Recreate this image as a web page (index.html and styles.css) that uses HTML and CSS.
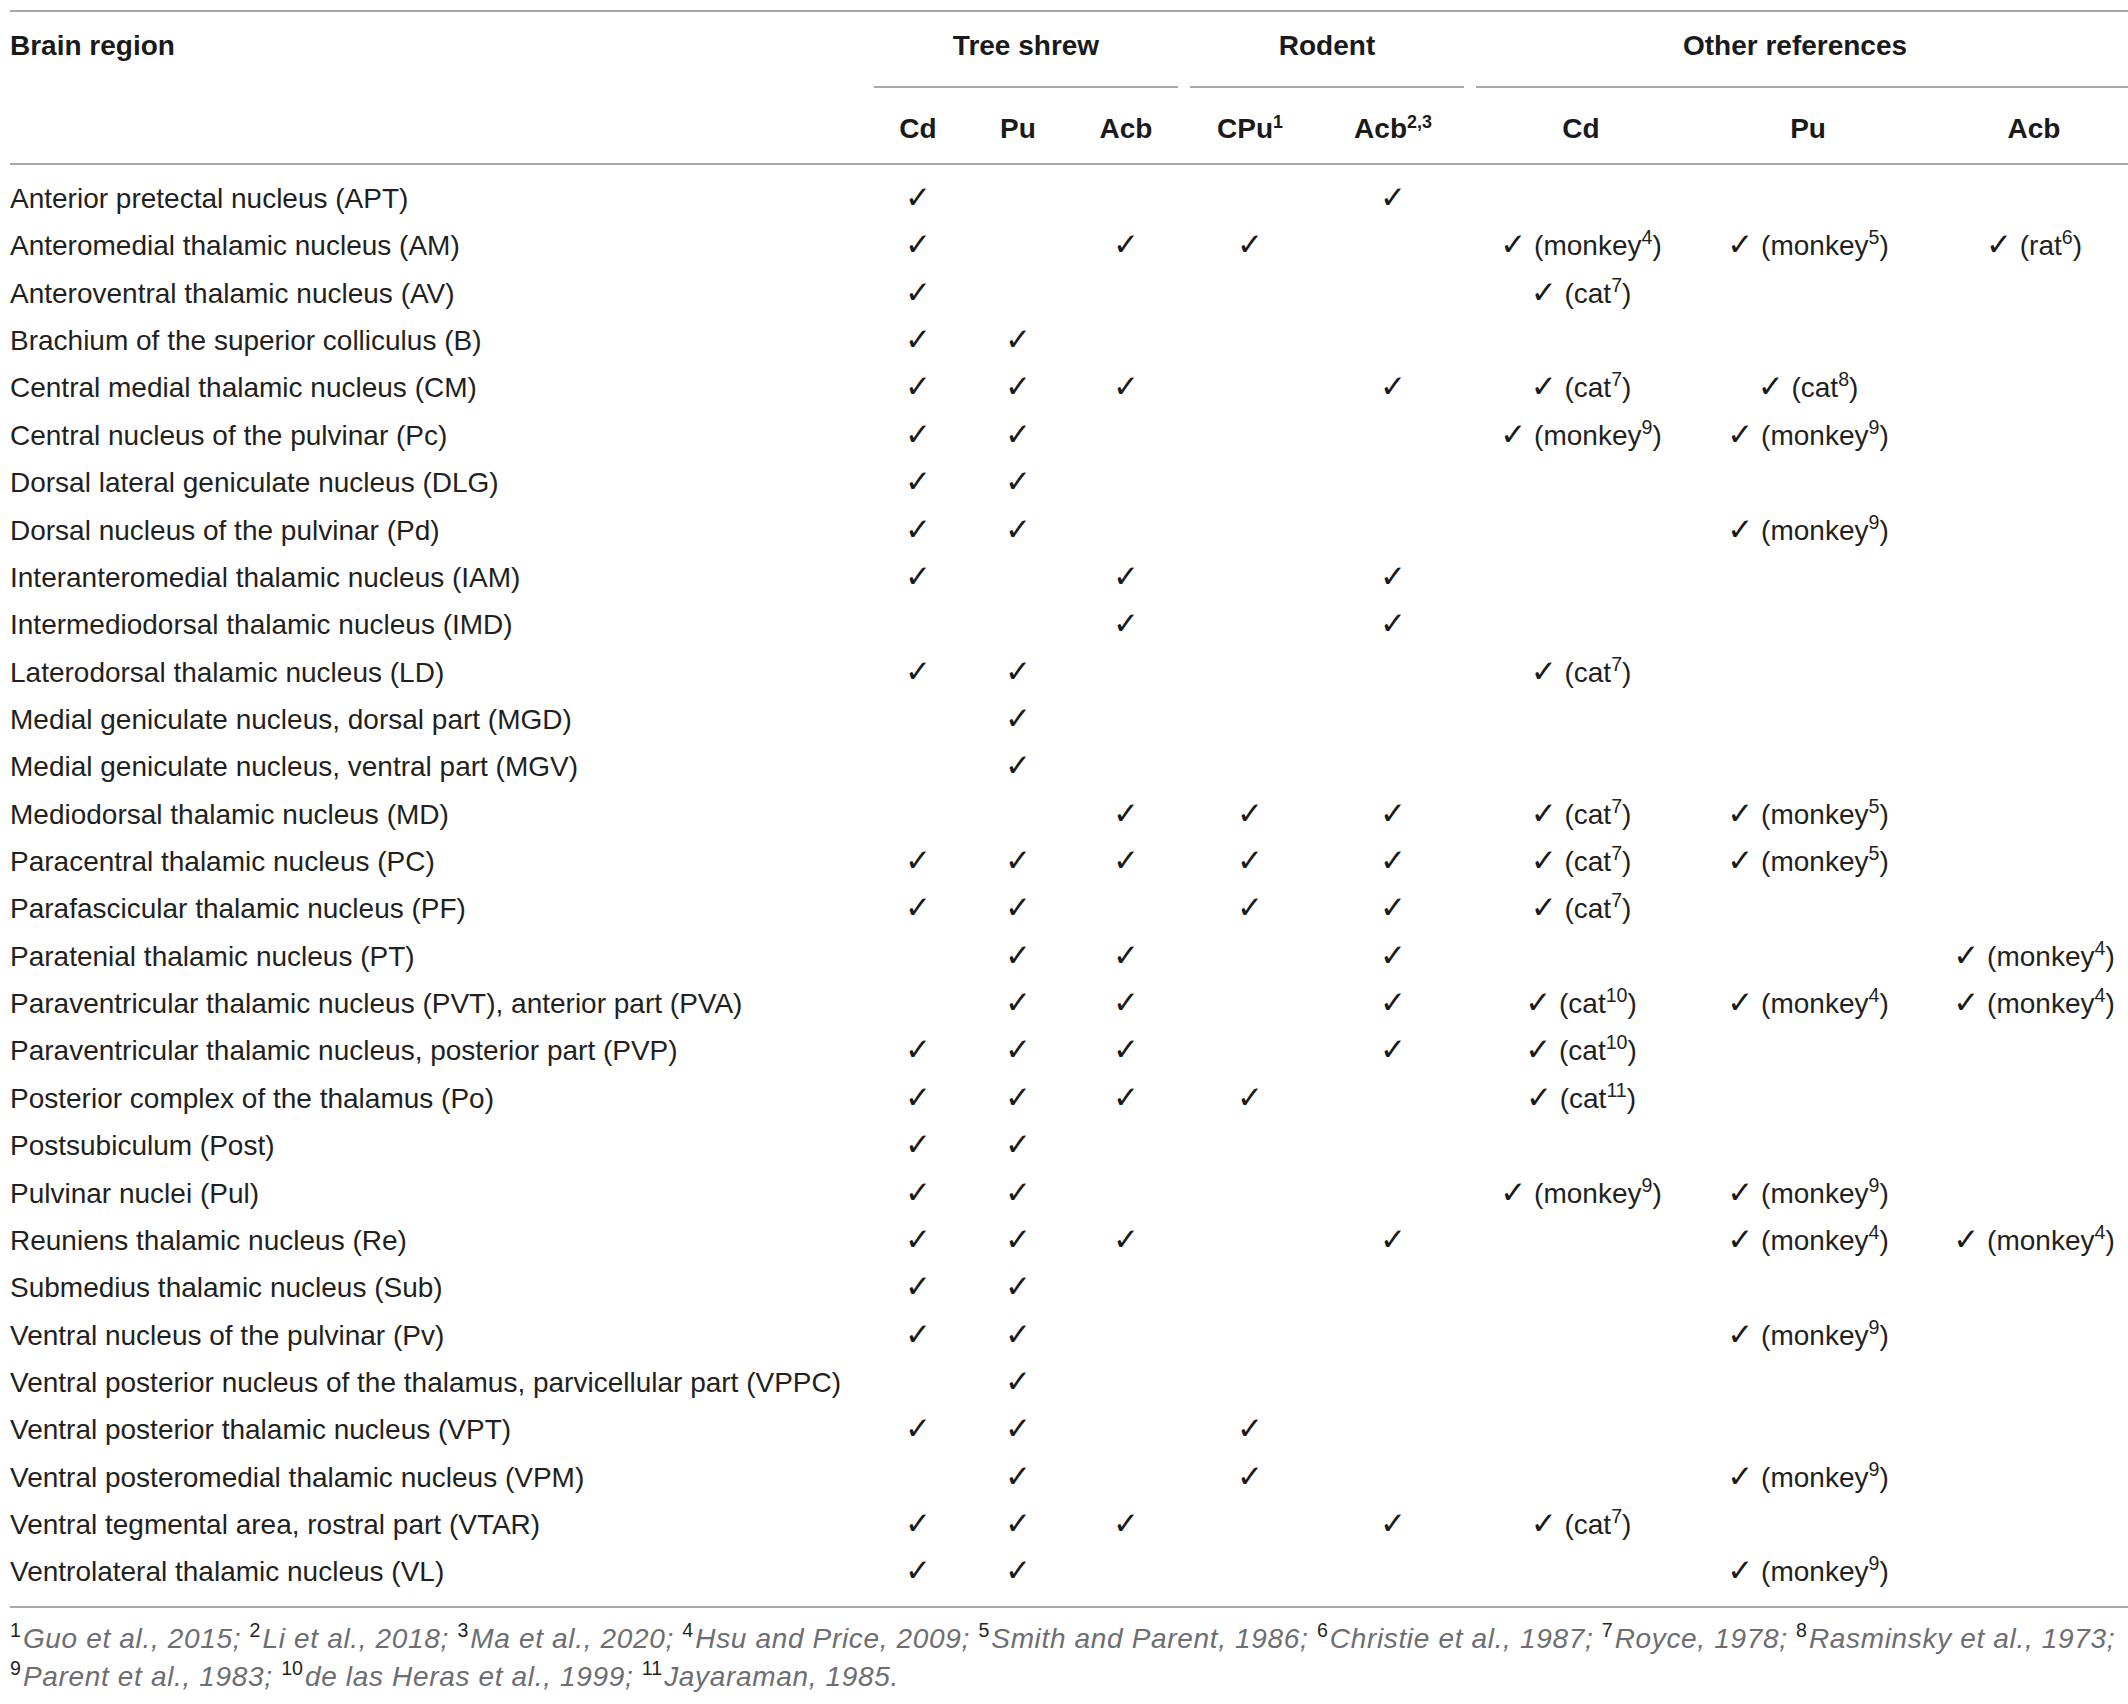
FILE: index.html
```html
<!DOCTYPE html>
<html lang="en">

<head>
    <meta charset="UTF-8">
    <title>Thalamic inputs to the striatum</title>
    <link rel="stylesheet" href="styles.css">
</head>

<body>
    <table class="data-table">
        <colgroup>
            <col class="col-region">
            <col class="col-100">
            <col class="col-100">
            <col class="col-116">
            <col class="col-132">
            <col class="col-154">
            <col class="col-222">
            <col class="col-232">
            <col class="col-204">
        </colgroup>
        <thead>
            <tr class="group-row">
                <th rowspan="2" class="region-head">Brain region</th>
                <th colspan="3" class="group"><div class="group-title">Tree shrew</div></th>
                <th colspan="2" class="group"><div class="group-title">Rodent</div></th>
                <th colspan="3" class="group group-last"><div class="group-title">Other references</div></th>
            </tr>
            <tr class="sub-row">
                <th>Cd</th>
                <th>Pu</th>
                <th>Acb</th>
                <th>CPu<sup>1</sup></th>
                <th>Acb<sup>2,3</sup></th>
                <th>Cd</th>
                <th>Pu</th>
                <th class="last-col">Acb</th>
            </tr>
        </thead>
        <tbody>
            <tr>
                <td>Anterior pretectal nucleus (APT)</td>
                <td><span class="tick">✓</span></td><td></td><td></td>
                <td></td><td><span class="tick">✓</span></td>
                <td></td><td></td><td class="last-col"></td>
            </tr>
            <tr>
                <td>Anteromedial thalamic nucleus (AM)</td>
                <td><span class="tick">✓</span></td><td></td><td><span class="tick">✓</span></td>
                <td><span class="tick">✓</span></td><td></td>
                <td><span class="tick">✓</span> (monkey<sup>4</sup>)</td>
                <td><span class="tick">✓</span> (monkey<sup>5</sup>)</td>
                <td class="last-col"><span class="tick">✓</span> (rat<sup>6</sup>)</td>
            </tr>
            <tr>
                <td>Anteroventral thalamic nucleus (AV)</td>
                <td><span class="tick">✓</span></td><td></td><td></td>
                <td></td><td></td>
                <td><span class="tick">✓</span> (cat<sup>7</sup>)</td><td></td><td class="last-col"></td>
            </tr>
            <tr>
                <td>Brachium of the superior colliculus (B)</td>
                <td><span class="tick">✓</span></td><td><span class="tick">✓</span></td><td></td>
                <td></td><td></td>
                <td></td><td></td><td class="last-col"></td>
            </tr>
            <tr>
                <td>Central medial thalamic nucleus (CM)</td>
                <td><span class="tick">✓</span></td><td><span class="tick">✓</span></td><td><span class="tick">✓</span></td>
                <td></td><td><span class="tick">✓</span></td>
                <td><span class="tick">✓</span> (cat<sup>7</sup>)</td>
                <td><span class="tick">✓</span> (cat<sup>8</sup>)</td>
                <td class="last-col"></td>
            </tr>
            <tr>
                <td>Central nucleus of the pulvinar (Pc)</td>
                <td><span class="tick">✓</span></td><td><span class="tick">✓</span></td><td></td>
                <td></td><td></td>
                <td><span class="tick">✓</span> (monkey<sup>9</sup>)</td>
                <td><span class="tick">✓</span> (monkey<sup>9</sup>)</td>
                <td class="last-col"></td>
            </tr>
            <tr>
                <td>Dorsal lateral geniculate nucleus (DLG)</td>
                <td><span class="tick">✓</span></td><td><span class="tick">✓</span></td><td></td>
                <td></td><td></td>
                <td></td><td></td><td class="last-col"></td>
            </tr>
            <tr>
                <td>Dorsal nucleus of the pulvinar (Pd)</td>
                <td><span class="tick">✓</span></td><td><span class="tick">✓</span></td><td></td>
                <td></td><td></td>
                <td></td><td><span class="tick">✓</span> (monkey<sup>9</sup>)</td><td class="last-col"></td>
            </tr>
            <tr>
                <td>Interanteromedial thalamic nucleus (IAM)</td>
                <td><span class="tick">✓</span></td><td></td><td><span class="tick">✓</span></td>
                <td></td><td><span class="tick">✓</span></td>
                <td></td><td></td><td class="last-col"></td>
            </tr>
            <tr>
                <td>Intermediodorsal thalamic nucleus (IMD)</td>
                <td></td><td></td><td><span class="tick">✓</span></td>
                <td></td><td><span class="tick">✓</span></td>
                <td></td><td></td><td class="last-col"></td>
            </tr>
            <tr>
                <td>Laterodorsal thalamic nucleus (LD)</td>
                <td><span class="tick">✓</span></td><td><span class="tick">✓</span></td><td></td>
                <td></td><td></td>
                <td><span class="tick">✓</span> (cat<sup>7</sup>)</td><td></td><td class="last-col"></td>
            </tr>
            <tr>
                <td>Medial geniculate nucleus, dorsal part (MGD)</td>
                <td></td><td><span class="tick">✓</span></td><td></td>
                <td></td><td></td>
                <td></td><td></td><td class="last-col"></td>
            </tr>
            <tr>
                <td>Medial geniculate nucleus, ventral part (MGV)</td>
                <td></td><td><span class="tick">✓</span></td><td></td>
                <td></td><td></td>
                <td></td><td></td><td class="last-col"></td>
            </tr>
            <tr>
                <td>Mediodorsal thalamic nucleus (MD)</td>
                <td></td><td></td><td><span class="tick">✓</span></td>
                <td><span class="tick">✓</span></td><td><span class="tick">✓</span></td>
                <td><span class="tick">✓</span> (cat<sup>7</sup>)</td>
                <td><span class="tick">✓</span> (monkey<sup>5</sup>)</td>
                <td class="last-col"></td>
            </tr>
            <tr>
                <td>Paracentral thalamic nucleus (PC)</td>
                <td><span class="tick">✓</span></td><td><span class="tick">✓</span></td><td><span class="tick">✓</span></td>
                <td><span class="tick">✓</span></td><td><span class="tick">✓</span></td>
                <td><span class="tick">✓</span> (cat<sup>7</sup>)</td>
                <td><span class="tick">✓</span> (monkey<sup>5</sup>)</td>
                <td class="last-col"></td>
            </tr>
            <tr>
                <td>Parafascicular thalamic nucleus (PF)</td>
                <td><span class="tick">✓</span></td><td><span class="tick">✓</span></td><td></td>
                <td><span class="tick">✓</span></td><td><span class="tick">✓</span></td>
                <td><span class="tick">✓</span> (cat<sup>7</sup>)</td><td></td><td class="last-col"></td>
            </tr>
            <tr>
                <td>Paratenial thalamic nucleus (PT)</td>
                <td></td><td><span class="tick">✓</span></td><td><span class="tick">✓</span></td>
                <td></td><td><span class="tick">✓</span></td>
                <td></td><td></td>
                <td class="last-col"><span class="tick">✓</span> (monkey<sup>4</sup>)</td>
            </tr>
            <tr>
                <td>Paraventricular thalamic nucleus (PVT), anterior part (PVA)</td>
                <td></td><td><span class="tick">✓</span></td><td><span class="tick">✓</span></td>
                <td></td><td><span class="tick">✓</span></td>
                <td><span class="tick">✓</span> (cat<sup>10</sup>)</td>
                <td><span class="tick">✓</span> (monkey<sup>4</sup>)</td>
                <td class="last-col"><span class="tick">✓</span> (monkey<sup>4</sup>)</td>
            </tr>
            <tr>
                <td>Paraventricular thalamic nucleus, posterior part (PVP)</td>
                <td><span class="tick">✓</span></td><td><span class="tick">✓</span></td><td><span class="tick">✓</span></td>
                <td></td><td><span class="tick">✓</span></td>
                <td><span class="tick">✓</span> (cat<sup>10</sup>)</td><td></td><td class="last-col"></td>
            </tr>
            <tr>
                <td>Posterior complex of the thalamus (Po)</td>
                <td><span class="tick">✓</span></td><td><span class="tick">✓</span></td><td><span class="tick">✓</span></td>
                <td><span class="tick">✓</span></td><td></td>
                <td><span class="tick">✓</span> (cat<sup>11</sup>)</td><td></td><td class="last-col"></td>
            </tr>
            <tr>
                <td>Postsubiculum (Post)</td>
                <td><span class="tick">✓</span></td><td><span class="tick">✓</span></td><td></td>
                <td></td><td></td>
                <td></td><td></td><td class="last-col"></td>
            </tr>
            <tr>
                <td>Pulvinar nuclei (Pul)</td>
                <td><span class="tick">✓</span></td><td><span class="tick">✓</span></td><td></td>
                <td></td><td></td>
                <td><span class="tick">✓</span> (monkey<sup>9</sup>)</td>
                <td><span class="tick">✓</span> (monkey<sup>9</sup>)</td>
                <td class="last-col"></td>
            </tr>
            <tr>
                <td>Reuniens thalamic nucleus (Re)</td>
                <td><span class="tick">✓</span></td><td><span class="tick">✓</span></td><td><span class="tick">✓</span></td>
                <td></td><td><span class="tick">✓</span></td>
                <td></td>
                <td><span class="tick">✓</span> (monkey<sup>4</sup>)</td>
                <td class="last-col"><span class="tick">✓</span> (monkey<sup>4</sup>)</td>
            </tr>
            <tr>
                <td>Submedius thalamic nucleus (Sub)</td>
                <td><span class="tick">✓</span></td><td><span class="tick">✓</span></td><td></td>
                <td></td><td></td>
                <td></td><td></td><td class="last-col"></td>
            </tr>
            <tr>
                <td>Ventral nucleus of the pulvinar (Pv)</td>
                <td><span class="tick">✓</span></td><td><span class="tick">✓</span></td><td></td>
                <td></td><td></td>
                <td></td><td><span class="tick">✓</span> (monkey<sup>9</sup>)</td><td class="last-col"></td>
            </tr>
            <tr>
                <td>Ventral posterior nucleus of the thalamus, parvicellular part (VPPC)</td>
                <td></td><td><span class="tick">✓</span></td><td></td>
                <td></td><td></td>
                <td></td><td></td><td class="last-col"></td>
            </tr>
            <tr>
                <td>Ventral posterior thalamic nucleus (VPT)</td>
                <td><span class="tick">✓</span></td><td><span class="tick">✓</span></td><td></td>
                <td><span class="tick">✓</span></td><td></td>
                <td></td><td></td><td class="last-col"></td>
            </tr>
            <tr>
                <td>Ventral posteromedial thalamic nucleus (VPM)</td>
                <td></td><td><span class="tick">✓</span></td><td></td>
                <td><span class="tick">✓</span></td><td></td>
                <td></td><td><span class="tick">✓</span> (monkey<sup>9</sup>)</td><td class="last-col"></td>
            </tr>
            <tr>
                <td>Ventral tegmental area, rostral part (VTAR)</td>
                <td><span class="tick">✓</span></td><td><span class="tick">✓</span></td><td><span class="tick">✓</span></td>
                <td></td><td><span class="tick">✓</span></td>
                <td><span class="tick">✓</span> (cat<sup>7</sup>)</td><td></td><td class="last-col"></td>
            </tr>
            <tr>
                <td>Ventrolateral thalamic nucleus (VL)</td>
                <td><span class="tick">✓</span></td><td><span class="tick">✓</span></td><td></td>
                <td></td><td></td>
                <td></td><td><span class="tick">✓</span> (monkey<sup>9</sup>)</td><td class="last-col"></td>
            </tr>
        </tbody>
    </table>

    <p class="footnotes">
        <sup>1</sup>Guo et al., 2015; <sup>2</sup>Li et al., 2018; <sup>3</sup>Ma et al., 2020; <sup>4</sup>Hsu and Price, 2009; <sup>5</sup>Smith and Parent, 1986; <sup>6</sup>Christie et al., 1987; <sup>7</sup>Royce, 1978; <sup>8</sup>Rasminsky et al., 1973;<br>
        <sup>9</sup>Parent et al., 1983; <sup>10</sup>de las Heras et al., 1999; <sup>11</sup>Jayaraman, 1985.
    </p>
</body>

</html>
```

FILE: styles.css
```css
* {
    margin: 0;
    padding: 0;
    box-sizing: border-box;
}

body {
    background-color: white;
    color: #231f20;
    font-family: "Liberation Sans", Arial, sans-serif;
}

.data-table {
    margin: 10px 0 0 10px;
    width: 2118px;
    table-layout: fixed;
    border-collapse: separate;
    border-spacing: 0;
    font-size: 28px;
}

.col-region { width: 858px; }
.col-100 { width: 100px; }
.col-116 { width: 116px; }
.col-132 { width: 132px; }
.col-154 { width: 154px; }
.col-222 { width: 222px; }
.col-232 { width: 232px; }
.col-204 { width: 204px; }

/* header */

.data-table th {
    font-weight: bold;
    color: #1a1a1a;
    white-space: nowrap;
}

.region-head {
    text-align: left;
    vertical-align: top;
    padding-top: 10px;
    line-height: 48px;
    border-top: 2px solid #a8a8a8;
    border-bottom: 2px solid #a8a8a8;
}

.group {
    vertical-align: top;
    border-top: 2px solid #a8a8a8;
}

.group-title {
    margin: 0 6px;
    padding: 10px 0 16px;
    line-height: 48px;
    border-bottom: 2px solid #a8a8a8;
}

.group-last .group-title {
    margin-right: 0;
    padding-right: 14px;
}

.sub-row th {
    padding: 17px 0 10px;
    line-height: 48px;
    border-bottom: 2px solid #a8a8a8;
}

.sub-row th.last-col {
    padding-left: 16px;
}

.sub-row sup {
    font-size: 0.64em;
}

/* body */

.data-table td {
    height: 47.36px;
    line-height: 47.36px;
    text-align: center;
    white-space: nowrap;
}

.data-table td:first-child {
    text-align: left;
}

.data-table td.last-col {
    padding-left: 16px;
}

.data-table tbody tr:first-child td {
    height: 57.36px;
    padding-top: 10px;
}

.data-table tbody tr:last-child td {
    height: 59.36px;
    padding-bottom: 10px;
    border-bottom: 2px solid #a8a8a8;
}

.tick {
    font-family: "DejaVu Sans", sans-serif;
    font-size: 31px;
    line-height: 0;
    color: #1a1a1a;
}

sup {
    font-size: 0.7em;
    line-height: 0;
    vertical-align: 0.55em;
}

/* footnotes */

.footnotes {
    margin: 12px 0 0 10px;
    font-size: 28px;
    line-height: 38px;
    font-style: italic;
    letter-spacing: 0.66px;
    color: #6d6e71;
    white-space: nowrap;
}

.footnotes sup {
    font-style: normal;
    color: #231f20;
    font-size: 0.7em;
    letter-spacing: 0;
    margin-right: 2px;
}
```
